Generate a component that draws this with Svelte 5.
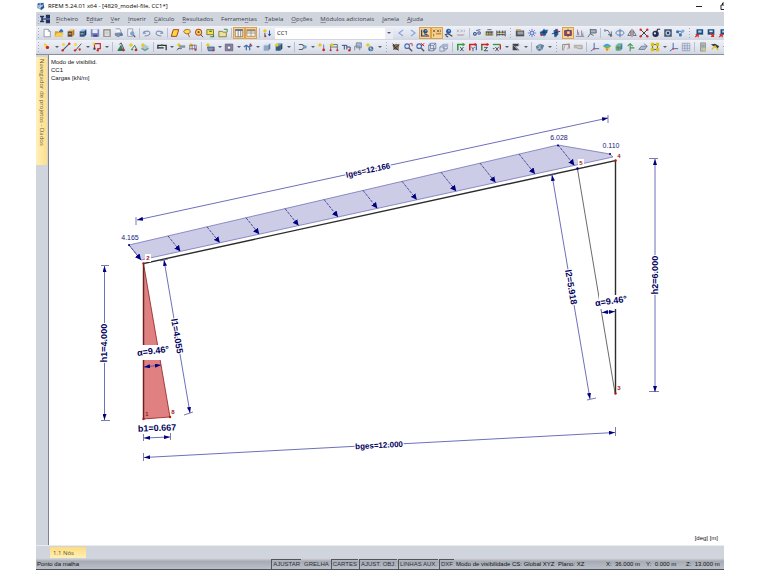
<!--
Main window: menu, toolbars, model view and status bar
-->
<script lang="ts">
	const menus = [
		'Ficheiro', 'Editar', 'Ver', 'Inserir', 'Cálculo', 'Resultados',
		'Ferramentas', 'Tabela', 'Opções', 'Módulos adicionais', 'Janela', 'Ajuda'
	];
	const menuKeys: Record<string, number> = { Editar: 1, Ferramentas: 7 };

	// Shape helpers for the 12x12 icons
	const s = (d: string, color = '#444', w = 1) =>
		`<path d="${d}" fill="none" stroke="${color}" stroke-width="${w}"/>`;
	const f = (d: string, color: string) => `<path d="${d}" fill="${color}"/>`;
	const c = (x: number, y: number, r: number, color: string) =>
		`<circle cx="${x}" cy="${y}" r="${r}" fill="${color}"/>`;

	const star = c(3.5, 3.5, 1.8, '#f5dc2a') + s('M3.5 1V6M1 3.5H6', '#d8b400', 0.6);
	const cube = (a: string, b: string, d: string) =>
		f('M2 4L5 1.5H10L7.5 4Z', a) + f('M2 4H7.5V10.5H2Z', b) + f('M7.5 4L10 1.5V8L7.5 10.5Z', d);
	const beams = s('M2 3V10M2 3H10V10M2 6H10', '#57606e') + c(2, 10, 1.2, '#d02020') + c(10, 10, 1.2, '#d02020');
	const axis = (color: string, color2: string) =>
		s('M2 10V3H10', color, 1.6) + s('M2 4V10', color2, 1.6) + f('M8 1L11 3L8 5Z', color);
	const lens = c(5, 5, 3.4, '#4a6ca8') + c(5, 5, 2, '#dce8f8') + s('M7.5 7.5L11 11', '#555', 1.6);

	const icons: Record<string, string> = {
		page: f('M2.5 1.5H7.5L10 4V10.5H2.5Z', '#fff') + s('M2.5 1.5H7.5L10 4V10.5H2.5Z', '#707786', 0.8) + s('M7.5 1.5V4H10', '#707786', 0.7),
		open: f('M1 4H5L6 5H10V10.5H1Z', '#d9a520') + f('M1 10.5L3.5 6H12L9.5 10.5Z', '#f5cf55') + f('M6 4L8.5 1L11 3V5H6Z', '#3f73b4'),
		boxBrown: cube('#f4c46c', '#5b4a3c', '#b8782c') + s('M3 7H6.5', '#f2b24a', 1.3),
		boxBlue: cube('#8fc2ee', '#26548f', '#183b6d') + s('M3 7H6.5', '#e9b549', 1.3),
		save: f('M1 1.5H11V10.5H1Z', '#7d83c4') + f('M3 1.5H9V6H3Z', '#e9ecfa') + f('M4 8H9V10.5H4Z', '#414a86'),
		paste: f('M1.5 1.5H10.5V10.5H1.5Z', '#8c8170') + f('M3 3H9V9.5H3Z', '#e4e6ea') + s('M4 5H8M4 7H8', '#9aa0aa', 0.7),
		print: f('M2 1H7L9 6L4 7Z', '#f4f6fa') + s('M2 1H7L9 6', '#68748b', 0.8) + f('M1 6L9 5L11 8L5 11L1 9Z', '#808da4') + c(9, 8, 1.5, '#4673a8'),
		preview: f('M2 1H8V10H2Z', '#eef1f7') + s('M2 1H8V10H2Z', '#7e8799', 0.8) + c(7.5, 6.5, 2.6, '#7fa2cf') + s('M9 8.5L11 11', '#555', 1.4),
		undo: s('M3 3.5L1.5 6L4.5 6.5M2 6C4 3 9 3 9.5 6C9.5 8.5 7 9.5 3 9.5', '#8295b5', 1.3),
		redo: s('M9 3.5L10.5 6L7.5 6.5M10 6C8 3 3 3 2.5 6C2.5 8.5 5 9.5 9 9.5', '#8295b5', 1.3),
		surface: f('M1.5 10L4 2H10.5L8 10Z', '#f6dd3b') + s('M1.5 10L4 2H10.5L8 10Z', '#b02a20', 1.1),
		lasso: f('M2 4C3 1 10 1 10 4C10 8 3 8 2 4Z', '#f6e04a') + s('M2 4C3 1 10 1 10 4C10 8 3 8 2 4ZM7 6L9 11', '#a64e20', 1),
		ring: c(5.5, 5, 4.2, '#c23c24') + c(5.5, 5, 3, '#f9de48') + c(5.5, 5, 1.3, '#555') + s('M8 8L11 11', '#555', 1.2),
		select: f('M1 2H9V8H1Z', '#f6e04a') + s('M1 2H9V8H1Z', '#7a6a20', 1) + s('M4 4H7M9 8V10.5H5', '#2e8b3a', 1.4),
		folderGreen: f('M1 4H5L6 5H10V10.5H1Z', '#e8e29a') + s('M1 4H5L6 5H10V10.5H1Z', '#80742c', 1) + s('M7 1.5H11V5', '#3d8a3a', 1.2),
		table1: f('M1.5 1.5H10.5V10.5H1.5Z', '#f4f4f2') + s('M1.5 2H10.5V10.5H1.5ZM5 2V10.5M8 2V10.5', '#7c6b54', 0.9) + f('M1.5 1.5H10.5V3.5H1.5Z', '#5b6da0'),
		table2: f('M1 2H11V10H1Z', '#f4f4f2') + s('M1 2H11V10H1ZM1 6H11M6 2V10', '#8c7c62', 0.8) + f('M1 2H11V4H1Z', '#99836a'),
		loadCase: star + s('M3.5 6V10M9 3V9M7.5 7L9 9.5L10.5 7', '#22459a', 1.1) + c(4, 10, 1.2, '#d02020'),
		left: s('M8.5 2.5L3.5 6L8.5 9.5', '#88a6dc', 1.4),
		right: s('M3.5 2.5L8.5 6L3.5 9.5', '#88a6dc', 1.4),
		showLoads: c(6.5, 3.8, 2.6, '#1f4f9b') + s('M2 2V10M1 9.5H11M5 7L9 8', '#1f3568', 1.3) + c(7, 3.3, 0.8, '#8fbdf2'),
		showValues: s('M1 2L4 5M4 2L1 5M6 2L8.5 5M8.5 2L6 5M10 2V5M2 7V10M5 7H11', '#6b512c', 0.9),
		results: c(5.5, 4, 3, '#285da3') + c(6, 3.2, 1, '#9cc7f1') + s('M1 8L5 7L10 10M2 9L5 11', '#38404d', 1.3),
		values: s('M1 2L3.5 5M3.5 2L1 5M5.5 2L8 5M8 2L5.5 5M10 2V5M1 8H10', '#a5a9b4', 0.9) + s('M2 9H9', '#d69090', 0.8),
		glasses: c(3.5, 7, 2.3, '#304a82') + c(3.5, 7, 1, '#dfe6f4') + c(8.5, 6, 2.2, '#3d5c97') + c(8.5, 6, 0.9, '#dfe6f4') + s('M5 3L10 2', '#304a82', 1),
		calc: f('M2 4H11V9H2Z', '#4b4f55') + s('M1 10V5M4 5V9M7 5V9M10 5V10M2 7H11', '#ddd36b', 0.7) + s('M4 2H9', '#4b4f55', 1),
		calcAll: s('M1 3V10M11 3V10M1 5H11M1 8H11M4 3V9M8 3V9', '#3e454f', 1.1) + s('M2 6.5H10', '#d8c94a', 1),
		list: f('M1 3H11V10H1Z', '#4c525a') + s('M3 5H10M3 7H10', '#f0f2f5', 0.9) + f('M1 1.5H7V3H1Z', '#d0984a'),
		gear: s('M6 1V11M1 6H11M2.5 2.5L9.5 9.5M9.5 2.5L2.5 9.5', '#5d6fc4', 1) + c(6, 6, 2.4, '#6c7ed2') + c(6, 6, 1.1, '#fff'),
		planeXY: f('M1 6L5 2H11L8 9H2Z', '#266aa8') + s('M1 5H10M6 1V10', '#17315b', 1) + c(3, 8.5, 1.3, '#d62222'),
		planeYZ: f('M3 3L8 1L9 8L4 11Z', '#266aa8') + s('M1 7L11 4M6 1V11', '#17315b', 1) + c(8, 4, 1.2, '#d62222'),
		planeXZ: f('M2 3H10V9H2Z', '#d03030') + s('M2 3H10V9H2ZM6 1V11', '#274c90', 1) + f('M5 4H8V7H5Z', '#f4e08a'),
		mirror: s('M3 2V8M8 3V9M1 10H11', '#8f6a80', 1) + f('M2 8L5 4V9ZM7 9L10 5V10Z', '#8ea2c0'),
		flag: f('M4 2H11V6H4Z', '#aab3c4') + s('M4 2H11V6H4M4 1V7L1 11M4 7L8 9', '#4b5870', 1),
		move: s('M2 3L6 3L9 8M6 8H10V4', '#576171', 1) + c(2.5, 3, 1.5, '#8c96a8') + c(9.5, 9, 1.5, '#59657a'),
		rotate: s('M6 1V11', '#5a6270', 1) + s('M3 3.5C0 5 1 8 4 8.5H8C11 8 11.5 5 9 3.5H3', '#4f7fc1', 1.2),
		flip: s('M6 1V11', '#c03030', 0.9) + s('M4.5 3V9H1ZM7.5 3V9H11Z', '#54606f', 1),
		cut: s('M1.5 1.5L10.5 10.5M10.5 1.5L1.5 10.5', '#3e424a', 1.2) + c(2, 2, 1.4, '#d62222') + c(10, 2, 1.4, '#d62222') + c(2, 10, 1.4, '#d62222') + c(10, 10, 1.4, '#d62222'),
		bomb: c(5.5, 7, 3.8, '#222a48') + s('M7 4L8 1.5H11', '#222a48', 1.4) + c(4.7, 6.5, 1.3, '#dfe4f2'),
		camera: f('M1.5 1.5H10.5V10.5H1.5Z', '#45536b') + c(6, 6, 3, '#b5c7e2') + c(6, 6, 1.5, '#283f6c'),
		nodes: s('M3 4L6 8L10 3M3 4H8', '#38629e', 1) + c(3, 4.5, 1.8, '#3871bf') + c(6.5, 8.5, 1.8, '#3871bf') + c(9.5, 3.5, 1.8, '#7fa8d8'),
		module1: f('M3 1.5H11V8H3Z', '#1c4f83') + f('M5 3H9V5.5H5Z', '#a7d1ef') + s('M1.5 11L5 7.5M2 8H5V11', '#dc2a24', 1.4),
		module2: f('M2 1.5H10V8H2Z', '#1c4f83') + f('M4 3H8V5H4Z', '#dbeaf6') + s('M5 6L9 10M6 10H9V7', '#dc2a24', 1.4),
		node: c(4, 4, 1.7, '#f5dc2a') + c(6.5, 6.5, 2, '#d42222') + s('M3 2L5 4', '#d8b400', 1),
		line: s('M2 10L10 2', '#4f5865', 1.3) + c(2, 10, 1.4, '#d42222') + c(10, 2, 1.4, '#d42222') + c(3, 3, 1.7, '#f5dc2a'),
		lineNodes: s('M3 10L10 2', '#4f5865', 1.2) + c(2.5, 10, 1.4, '#d42222') + c(8, 9, 1.4, '#d42222') + c(3, 3, 1.7, '#f5dc2a'),
		member: s('M3 8V2H10V8H7V10', '#c53030', 1.4) + c(3, 8, 1.4, '#3a3f49') + c(7, 10, 1.4, '#d42222') + c(2, 2, 1.5, '#f5dc2a'),
		support: f('M2 10L6 3L9 10Z', '#35844b') + s('M4 3L6 1L8 5L10 10H2', '#26354a', 1) + c(9, 10, 1.3, '#d42222'),
		hinge: star + s('M5 8L8 4L11 10', '#40804d', 1.2) + c(5, 9, 1.3, '#3a9c47') + c(9.5, 9.5, 1.5, '#d42222'),
		layers: f('M1 8L6 5L11 8L6 11Z', '#6fa096') + f('M1 6L6 3L11 6L6 9Z', '#a9cbd7') + star,
		frame: s('M1 8V4H11V10M1 7H8', '#2a3038', 1.5) + c(6, 4, 1.2, '#30603a'),
		comment: star + f('M4 4H11V7H4Z', '#8894a8') + s('M1 10L4 7M2 8H7', '#4b535e', 1),
		dimension: star + s('M2 10V4H10V10M2 8H10M5 3V10M8 3V10', '#7b6478', 0.9) + c(9, 9.5, 1, '#d42222'),
		newSurface: star + f('M3 6H11V10.5H4Z', '#7396c1') + s('M3 6H11V10.5H4Z', '#38516f', 0.9) + c(10, 10, 1.2, '#d42222'),
		opening: f('M1.5 2.5H10.5V10.5H1.5Z', '#6a93c4') + f('M4 5H8V8.5H4Z', '#fff') + s('M1.5 2.5H10.5V10.5H1.5ZM4 5H8V8.5H4Z', '#803f4a', 0.8),
		section: s('M1 6L4 4L7 6L11 4M4 4V10M8 4V10', '#3f6fa8', 1.5) + c(9, 3, 1.2, '#d42222'),
		solid: cube('#d3e1f1', '#8ca8cb', '#6481a8'),
		solidLoad: cube('#6c9ec6', '#315f84', '#244867') + star,
		link: s('M1 3H5L8 5.5L5 9H1', '#56616e', 1.3) + c(8.5, 6, 2, '#6aa3c0'),
		nodeLoad: star + s('M8 3V9', '#5d6b8c', 1) + c(8, 9.5, 1.6, '#d42222'),
		beams1: beams + star,
		beams2: s('M1 4H7V9M4 4V9M7 6H11V10', '#3f4f82', 1.2) + c(10, 10, 1.4, '#d42222'),
		sheet: f('M4 1H10V7H4Z', '#aebdd2') + s('M4 1H10V7H4ZM2 10V5H8V10', '#75849a', 1),
		globe: star + c(7, 8, 3, '#3b678f') + s('M5 7L9 9M7 5V11', '#b9d8ee', 0.9),
		person: f('M2 4L6 2L10 3L9 10L3 9Z', '#89755b') + s('M2 4L9 10M10 3L3 9M2 2L5 5', '#323032', 1.1),
		zoomIn: lens + s('M8 2H11V5', '#d42222', 1),
		zoomOut: lens + s('M7.5 1.5L11 5M11 1.5L7.5 5', '#d42222', 1.2),
		wire: s('M2 4H8V10.5H2ZM4 1.5H10.5V8H4ZM2 4L4 1.5M8 4L10.5 1.5M8 10.5L10.5 8M2 10.5L4 8', '#5e7194', 0.9),
		wires: s('M1 6H6V11H1ZM5 3H10V8H5ZM1 6L5 3M6 11L10 8', '#7d89ad', 0.9) + f('M6 2H11V6H6Z', '#aab5d2'),
		viewX: axis('#2f9c3e', '#2e9c3e') + s('M5 6L9 11M9 6L5 11', '#333c54', 1),
		viewY: axis('#d42222', '#d42222') + s('M10 4V10', '#2852c4', 1.3) + s('M4 6L6 8V11M8 6L6 8', '#333c54', 1),
		viewZ: axis('#d42222', '#2f9c3e') + s('M5 6.5H9L5 10.5H9.5', '#333c54', 1),
		viewMinusX: s('M1 3H10', '#2f9c3e', 1.6) + s('M10 3V9', '#d42222', 1.6) + s('M1 8H3M4 6L8 11M8 6L4 11', '#333c54', 1),
		tool: f('M2 2H9V5H5L10 10H2Z', '#3f454c') + s('M3 4L9 10M8 1L11 4', '#adb4bd', 1),
		bolt: f('M1 5L6 2L11 4L9 9L5 11L2 9Z', '#65809c') + s('M3 4L8 9M6 2V7L2 9', '#c2d2e2', 0.9),
		deform: s('M2 10V3H10V8', '#6c9473', 1.1) + s('M3 10L5 3L10 2L8 9', '#c78484', 0.9),
		range: f('M1 4H11V8H1Z', '#d1c9bd') + s('M1 4H11V8H6L4 6H1', '#98908c', 0.8),
		axes3: s('M5 1V8L1 11M5 8H11', '#4d6cb2', 1.2) + c(5, 8, 1.2, '#d64b46'),
		rainbow: f('M1 5C4 1 8 1 11 5L6 7Z', '#41a4d7') + f('M2 6L10 5L9 9L6 11Z', '#f2ce3c') + s('M3 5L6 7L10 5', '#58b06a', 1.4) + c(6, 9, 1.2, '#e07a38'),
		mesh: cube('#69bb9e', '#57b979', '#3e83a0') + c(5, 7, 1.5, '#e48a46') + s('M2 7H8M5 4V10', '#436584', 0.7),
		reaction: s('M5 11V3M2 5L5 2L8 5M5 7H10', '#449454', 1.3),
		slab: f('M1 9L4 5H11L8 9Z', '#a9b9ce') + s('M1 9L4 5H11L8 9ZM7 2L11 5', '#6b7890', 1),
		blocks: s('M3 3H9V9H3Z', '#4a4a24', 1) + f('M1 1H5V5H1ZM7 1H11V5H7ZM1 7H5V11H1ZM7 7H11V11H7Z', '#d6c321'),
		grid: s('M1.5 1.5H10.5V10.5H1.5ZM1.5 4.5H10.5M1.5 7.5H10.5M4.5 1.5V10.5M7.5 1.5V10.5', '#8c95b8', 0.9),
		report: f('M3 1H9V11H3Z', '#b7bdb9') + s('M3 1H9V11H3ZM4 4H8M4 6H8', '#7f8585', 0.8) + f('M6 7H9V11H6Z', '#d7c67c'),
		paint: f('M1 3L6 2L11 5L9 8Z', '#34383f') + s('M2 9L6 5L10 10', '#e0c52a', 1.7)
	};

	// '|' separator, ':' grip, 'v' drop arrow, '*' pressed button
	const fileTools = 'page open boxBrown boxBlue save paste print preview | undo redo | surface lasso ring select folderGreen | *table1 *table2 | loadCase'.split(' ');
	const viewTools = 'left right *showLoads *showValues results values | glasses calc calcAll : list gear planeXY planeYZ *planeXZ mirror flag | move rotate flip cut bomb camera nodes : module1 module2 module1'.split(' ');
	const modelTools = 'node v line lineNodes v member v | support hinge layers | frame v comment dimension | newSurface v opening v section v solid solidLoad v | link v nodeLoad beams1 beams2 sheet globe v : person zoomIn zoomOut wire wires | viewX viewY viewZ viewMinusX v tool v | bolt v : deform range | axes3 rainbow mesh reaction slab blocks v axes3 grid | report paint v'.split(' ');

	// Line load: top edge to member, twelve arrows
	const loadArrows = Array.from({ length: 12 }, (_, i) => ({
		x1: 129 + 39 * i,
		y1: 245 - 9.1 * i,
		x2: 141 + 39.4 * i,
		y2: 260 - 8.6 * i
	}));

	const dims = [
		{ text: 'lges=12.166', d: 'M137 220L608 118', tick: 'M136 217V225M608 115V123', x: 368, y: 170, a: -12, size: 8 },
		{ text: 'h1=4.000', d: 'M104.500 266V420', tick: 'M101 265.500H109M101 420.500H110', x: 104, y: 343, a: -90, size: 9 },
		{ text: 'h2=6.000', d: 'M655 159V392', tick: 'M649 158.500H658M649 391.500H659', x: 655, y: 275, a: -90, size: 9 },
		{ text: 'l1=4.055', d: 'M164 260L190 413', tick: 'M160 261L168 259M184 415L193 412', x: 177, y: 336, a: 80, size: 9 },
		{ text: 'l2=5.918', d: 'M552 175L590 399', tick: 'M547 176L556 174M587 400L596 398', x: 571, y: 287, a: 80, size: 9 },
		{ text: 'bges=12.000', d: 'M144 457.500L615 432.500', tick: 'M143.500 453V461M615.500 427V436', x: 379, y: 445, a: -3, size: 8 },
		{ text: 'b1=0.667', d: 'M144 438L170 437', tick: 'M143.500 434V441M170.500 433V440', x: 157, y: 428, a: -2, size: 9 }
	];

	const nodes = [
		{ n: 1, x: 147, y: 416 },
		{ n: 2, x: 148, y: 260 },
		{ n: 3, x: 619, y: 390 },
		{ n: 4, x: 619, y: 158 },
		{ n: 5, x: 581, y: 165 },
		{ n: 8, x: 173, y: 414 }
	];

	let toggles = $state([
		{ label: 'AJUSTAR', on: true },
		{ label: 'GRELHA', on: false },
		{ label: 'CARTES', on: true },
		{ label: 'AJUST. OBJ.', on: true },
		{ label: 'LINHAS AUX.', on: true },
		{ label: 'DXF', on: true }
	]);
</script>

{#snippet tools(items: string[])}
	{#each items as item}
		{#if item === '|'}
			<span class="sep"></span>
		{:else if item === ':'}
			<span class="grip"></span>
		{:else if item === 'v'}
			<button type="button" class="drop" aria-label="Mais"></button>
		{:else}
			<button type="button" class="tool" class:pressed={item[0] === '*'} aria-label={item.replace('*', '')}>
				<svg viewBox="0 0 12 12">{@html icons[item.replace('*', '')]}</svg>
			</button>
		{/if}
	{/each}
{/snippet}

<div class="window">
	<header class="title">
		<svg class="logo" viewBox="0 0 12 12">
			<circle cx="5" cy="6" r="4" fill="#86a4c4" />
			<path d="M2 3L9 2L10 8L6 11Z" fill="#2c5b94" />
			<path d="M1 6H8M5 2V9M3 9L9 4" stroke="#d8e5f1" fill="none" />
		</svg>
		<h1>RFEM 5.24.01 x64 - [4829_model-file, CC1*]</h1>
		<button type="button" class="win" aria-label="Minimizar">
			<svg viewBox="0 0 8 8"><path d="M1 4.500H7" stroke="#222" /></svg>
		</button>
		<button type="button" class="win" aria-label="Restaurar">
			<svg viewBox="0 0 8 8"><path d="M1 3H5.500V7.500H1ZM2.500 3V1H7.500V6H5.500" fill="none" stroke="#222" /></svg>
		</button>
	</header>

	<nav class="menu">
		<span class="grip"></span>
		<svg class="logo" viewBox="0 0 12 12">
			<path d="M0 2H5V4H3.500V8H5V10H0V8H1.500V4H0ZM7 1H12V5H7ZM7 7H12V11H7Z" fill="#1d3566" />
			<path d="M3 6H12" stroke="#1d3566" stroke-width="1.500" />
		</svg>
		{#each menus as item}
			{@const k = menuKeys[item] ?? 0}
			<button type="button">{item.slice(0, k)}<u>{item[k]}</u>{item.slice(k + 1)}</button>
		{/each}
	</nav>

	<div class="toolbar">
		<span class="grip"></span>
		{@render tools(fileTools)}
		<span class="combo">
			<select aria-label="Caso de carga">
				<option>CC1</option>
			</select>
		</span>
		{@render tools(viewTools)}
	</div>
	<div class="toolbar model">
		<span class="grip"></span>
		{@render tools(modelTools)}
	</div>

	<main>
		<aside>
			<button type="button" class="side-tab">Navegador de projetos - Dados</button>
		</aside>
		<section class="view">
			<p class="info">Modo de visibilid.<br />CC1<br />Cargas [kN/m]</p>
			<svg class="drawing" viewBox="49 55 675 490" preserveAspectRatio="xMidYMin meet">
				<defs>
					<marker id="dim" viewBox="0 0 6 4" refX="6" refY="2" markerWidth="6" markerHeight="4" markerUnits="userSpaceOnUse" orient="auto-start-reverse">
						<path d="M0 0L6 2L0 4Z" fill="#000080" />
					</marker>
					<marker id="load" viewBox="0 0 6 6" refX="6" refY="3" markerWidth="6" markerHeight="6" markerUnits="userSpaceOnUse" orient="auto">
						<path d="M0 0L6 3L0 6Z" fill="#000080" />
					</marker>
				</defs>

				<!-- line load -->
				<path class="load" d="M129 245L558 145L610 154L613 157L141 260Z" />
				{#each loadArrows as a}
					<line class="load-arrow" x1={a.x1} y1={a.y1} x2={a.x2} y2={a.y2} />
				{/each}
				<circle cx="129" cy="245" r="1" fill="#000080" />
				<circle cx="558" cy="145.500" r="1" fill="#000080" />
				<circle cx="610" cy="154" r="1" fill="#000080" />

				<!-- members -->
				<path class="column" d="M143.500 263.500L170 417L143.500 419Z" />
				<path class="member" d="M143.500 419V263.500L615.500 160.500V393" />
				<path d="M143.500 265V419" stroke="#801818" />
				<path class="guide" d="M577.500 169L615 393" />
				<circle cx="577.500" cy="168.500" r="1.200" fill="#000080" />

				{#each dims as dim}
					<path class="tick" d={dim.tick} />
					<path class="dim" d={dim.d} />
				{/each}
				{#each dims as dim}
					<text class="dim-text" font-size={dim.size} transform="translate({dim.x} {dim.y}) rotate({dim.a})" dy="3">{dim.text}</text>
				{/each}

				<!-- angles -->
				<rect x="141" y="345" width="23" height="15" fill="#fff" />
				<text class="dim-text" font-size="9" transform="translate(153 351) rotate(-7)" dy="3">α=9.46°</text>
				<path class="dim" d="M144 367L161 365" />
				<rect x="599" y="295" width="20" height="14" fill="#fff" />
				<text class="dim-text" font-size="9" transform="translate(611 301) rotate(-8)" dy="3">α=9.46°</text>
				<path class="dim" d="M602 312.500L615 311.500" />

				<text class="value" x="130" y="240">4.165</text>
				<text class="value" x="559" y="140">6.028</text>
				<text class="value" x="611" y="148">0.110</text>

				<rect x="145" y="254" width="6" height="8" fill="#fff" />
				<rect x="578" y="159" width="6" height="8" fill="#fff" />
				{#each nodes as node}
					<text class="node" x={node.x} y={node.y}>{node.n}</text>
				{/each}
				<g fill="#b01818">
					<circle cx="143.500" cy="263.500" r="1.200" />
					<circle cx="143.500" cy="419" r="1.200" />
					<circle cx="170" cy="417" r="1.200" />
					<circle cx="615.500" cy="160.500" r="1.200" />
					<circle cx="615.500" cy="393.500" r="1.200" />
				</g>
			</svg>
			<p class="units">[deg] [m]</p>
		</section>
	</main>

	<div class="tabs">
		<button type="button">1.1 Nós</button>
	</div>

	<footer>
		<span class="hint">Ponto da malha</span>
		<div class="toggles">
			{#each toggles as t}
				<button type="button" class:on={t.on} aria-pressed={t.on} onclick={() => (t.on = !t.on)}>{t.label}</button>
			{/each}
		</div>
		<span class="mode">Modo de visibilidade CS: Global XYZ</span>
		<span class="plane">Plano: XZ</span>
		<span class="coord">X:&nbsp; 36.000 m</span>
		<span class="coord">Y:&nbsp; 0.000 m</span>
		<span class="coord">Z:&nbsp; 13.000 m</span>
	</footer>
</div>

<style>
	:global(body) {
		margin: 0;
		background: #fff;
	}

	.window {
		box-sizing: border-box;
		min-height: 100vh;
		padding: 0 36px;
		display: flex;
		flex-direction: column;
		font-family: 'Open Sans', 'Noto Sans', sans-serif;
		font-size: 6px;
		line-height: 8px;
		color: #111;
	}

	button {
		font: inherit;
		color: inherit;
		background: none;
		border: 0;
		padding: 0;
		white-space: nowrap;
	}

	svg {
		display: block;
	}

	.title {
		display: flex;
		align-items: center;
		height: 12px;
		overflow: hidden;
	}

	.logo {
		width: 10px;
		height: 10px;
		flex-shrink: 0;
	}

	h1 {
		flex: 1;
		margin: 0 0 0 2px;
		font-size: 6px;
		font-weight: 400;
		color: #000;
	}

	.win {
		width: 8px;
		flex-shrink: 0;
	}

	.win + .win {
		margin: 0 -4px 0 17px;
	}

	.menu {
		display: flex;
		align-items: center;
		gap: 8px;
		height: 14px;
		overflow: hidden;
		background: #cfd4dd;
		color: #3a404e;
	}

	.menu .grip,
	.menu .logo {
		margin-right: -8px;
	}

	.menu .grip {
		width: 4px;
	}

	.menu .logo + button {
		margin-left: 6px;
	}

	u {
		text-underline-offset: 1px;
		text-decoration-thickness: 1px;
		text-decoration-color: #8a90a0;
	}

	.toolbar {
		display: flex;
		align-items: center;
		height: 14px;
		overflow: hidden;
		background: linear-gradient(#eef1f8, #dde1eb 70%, #d0d5e0);
	}

	.toolbar.model {
		border-bottom: 1px solid #8b8e98;
	}

	.toolbar > * {
		flex-shrink: 0;
	}

	.tool {
		width: 12px;
		height: 12px;
	}

	.tool svg {
		width: 10px;
		height: 10px;
		margin: 1px;
	}

	.pressed {
		background: #fbd28b;
		box-shadow: inset 0 0 0 1px #d9a250;
	}

	.sep {
		width: 4px;
		height: 10px;
		background: linear-gradient(#b9bfcc, #b9bfcc) center / 1px 100% no-repeat;
	}

	.model .sep {
		width: 5px;
	}

	.grip {
		width: 7px;
		height: 10px;
		background: repeating-linear-gradient(#a4abba 0 1px, transparent 1px 3px) center / 1px 100% no-repeat;
	}

	.toolbar .grip:first-child {
		width: 5px;
	}

	.drop {
		width: 7px;
		height: 12px;
		display: flex;
		align-items: center;
		justify-content: center;
	}

	.drop::before,
	.combo::after {
		content: '';
		border: 2px solid transparent;
		border-top-color: #555b68;
		border-bottom: 0;
	}

	.combo {
		display: flex;
		align-items: center;
		width: 118px;
		height: 11px;
		margin: 0 2px;
		background: linear-gradient(90deg, #fff 110px, #e9ecf3 110px);
	}

	.combo select {
		flex: 1;
		appearance: none;
		border: 0;
		background: none;
		padding: 0 2px;
		font: inherit;
		color: #111;
	}

	.combo::after {
		margin-right: 2px;
	}

	main {
		flex: 1;
		display: flex;
		background: #d0d4dd;
	}

	aside {
		width: 12px;
		padding-top: 2px;
	}

	.side-tab {
		writing-mode: vertical-rl;
		width: 11px;
		height: 108px;
		padding-top: 2px;
		text-align: left;
		color: #665c38;
		background: linear-gradient(90deg, #fff0bd, #ffdf85);
	}

	.view {
		position: relative;
		flex: 1;
		background: #fff;
		border-left: 1px solid #7e828c;
		font-family: 'Liberation Sans', Arial, sans-serif;
	}

	.info {
		position: absolute;
		top: 3px;
		left: 2px;
		margin: 0;
	}

	.units {
		position: absolute;
		right: 6px;
		bottom: 3px;
		margin: 0;
	}

	.drawing {
		width: 100%;
		height: auto;
	}

	.load {
		fill: #cccce6;
		stroke: #6464b4;
		stroke-width: 0.7px;
	}

	.load-arrow {
		stroke: #30308a;
		stroke-width: 0.8px;
		stroke-dasharray: 3 1;
		marker-end: url(#load);
	}

	.column {
		fill: #e08080;
		stroke: #8c2020;
		stroke-width: 0.8px;
	}

	.member {
		fill: none;
		stroke: #2c2c2c;
		stroke-width: 1.4px;
	}

	.guide {
		stroke: #444;
		stroke-width: 0.8px;
	}

	.dim {
		stroke: #4a4aa8;
		stroke-width: 0.8px;
		marker-start: url(#dim);
		marker-end: url(#dim);
	}

	.tick {
		stroke: #5a5a9c;
		stroke-width: 0.8px;
	}

	.dim-text {
		fill: #00005c;
		font-weight: 700;
		text-anchor: middle;
		stroke: #fff;
		stroke-width: 2px;
		paint-order: stroke;
	}

	.value {
		fill: #20207c;
		font-size: 7px;
		text-anchor: middle;
	}

	.node {
		fill: #a01818;
		font-size: 6px;
		font-weight: 700;
		text-anchor: middle;
	}

	.tabs {
		height: 13px;
		padding-left: 14px;
		background: #d0d4dd;
		border-top: 1px solid #e8ebf0;
		box-sizing: border-box;
	}

	.tabs button {
		display: block;
		width: 36px;
		height: 11px;
		margin-top: 1px;
		padding-left: 3px;
		text-align: left;
		color: #5c5538;
		background: linear-gradient(#ffdc7c, #fff0b8);
	}

	footer {
		display: flex;
		align-items: center;
		height: 11px;
		overflow: hidden;
		background: linear-gradient(#d6d9df, #a5aab4 30%, #bcc0c8);
		border-bottom: 1px solid #4c5058;
		font-family: 'Liberation Sans', Arial, sans-serif;
		white-space: nowrap;
	}

	.hint {
		flex: 1;
		padding-left: 1px;
	}

	.toggles {
		display: flex;
		gap: 1px;
	}

	.toggles button {
		height: 10px;
		padding: 0 1px;
		border: 1px solid transparent;
		border-width: 1px 0 0 1px;
		line-height: 8px;
		color: #2c3038;
	}

	.toggles button.on {
		border-color: #50545c;
	}

	.mode {
		width: 102px;
		padding-left: 2px;
	}

	.plane {
		width: 48px;
	}

	.coord {
		width: 40px;
	}

	.coord:last-child {
		width: 38px;
	}
</style>
